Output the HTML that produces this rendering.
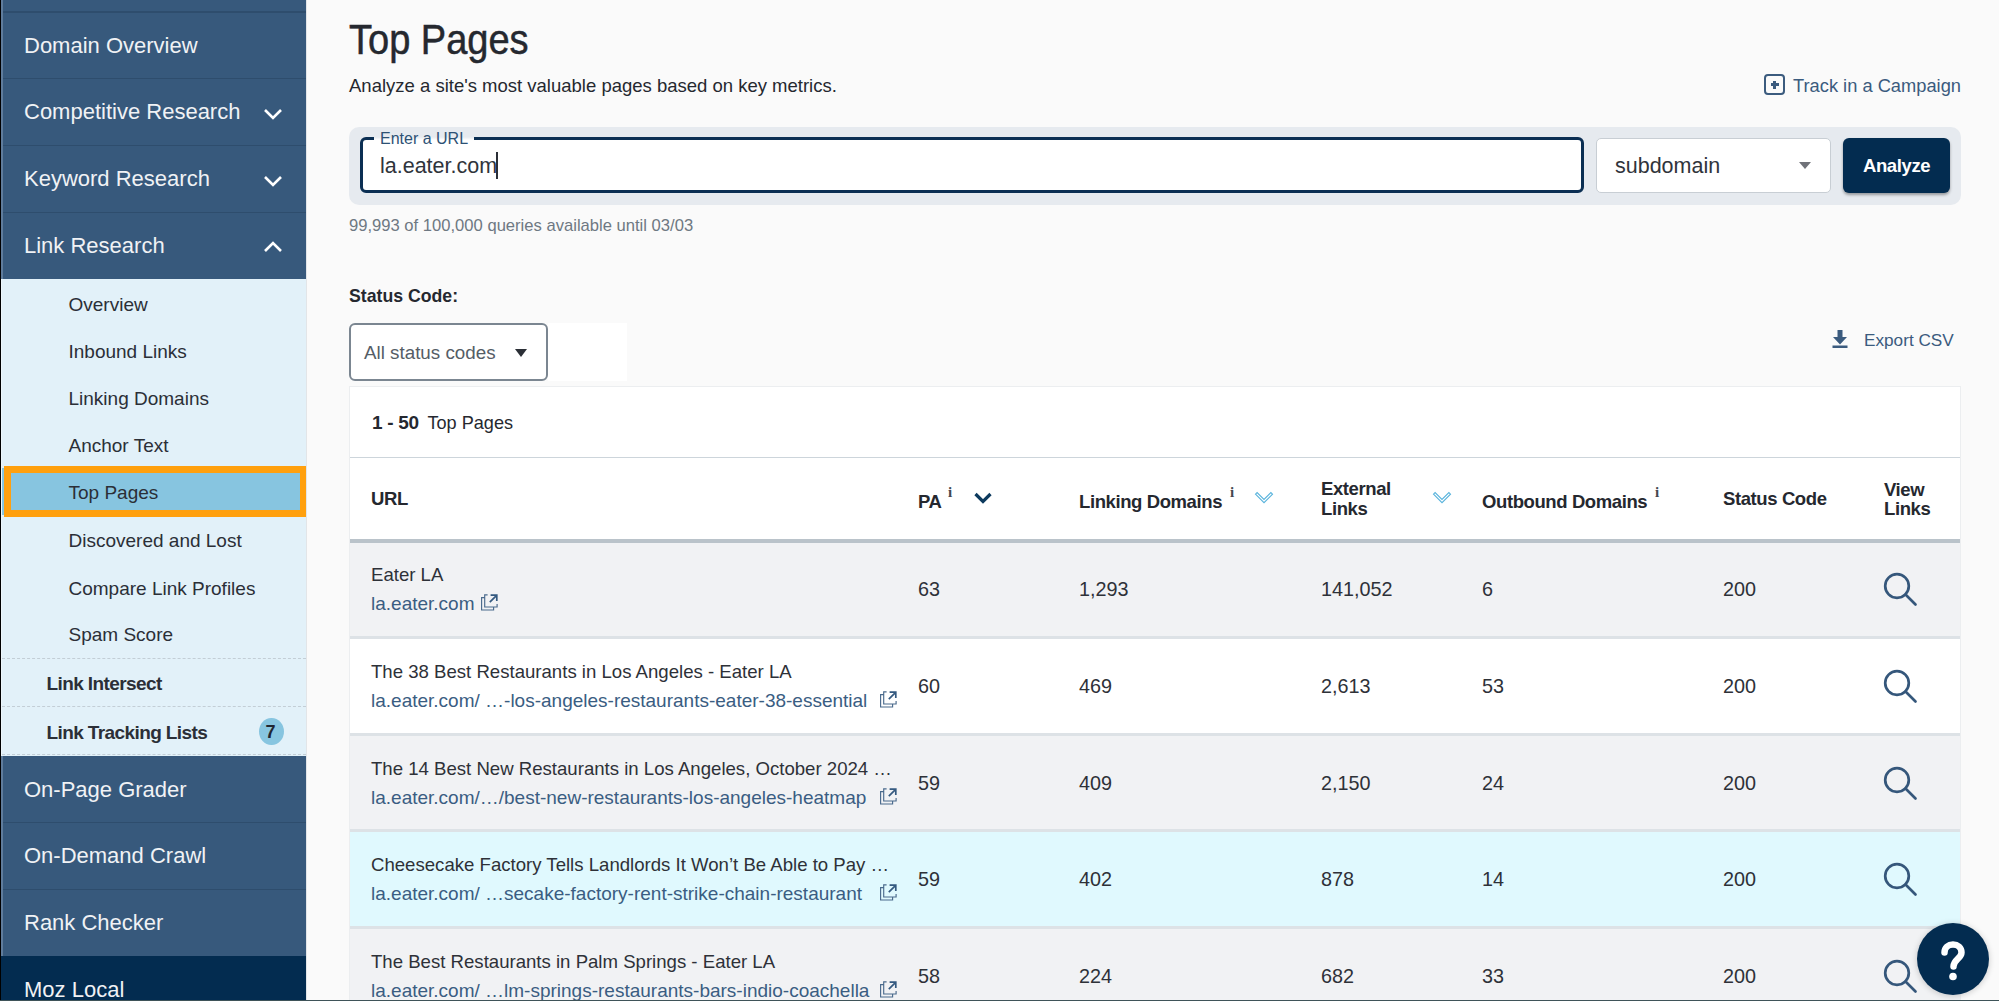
<!DOCTYPE html>
<html><head><meta charset="utf-8">
<style>
*{box-sizing:border-box;margin:0;padding:0}
html,body{width:1999px;height:1001px;overflow:hidden;background:#fafafa;font-family:"Liberation Sans",sans-serif;color:#2a2d35}
.a{position:absolute;white-space:nowrap;line-height:1}
</style></head>
<body>
<div style="position:absolute;left:0px;top:0px;width:306px;height:1001px;background:#37597c"></div>
<div style="position:absolute;left:0px;top:11px;width:306px;height:2px;background:#2e4d6d"></div>
<div style="position:absolute;left:0px;top:78px;width:306px;height:1px;background:#2e4d6d"></div>
<div style="position:absolute;left:0px;top:145px;width:306px;height:1px;background:#2e4d6d"></div>
<div style="position:absolute;left:0px;top:212px;width:306px;height:1px;background:#2e4d6d"></div>
<div style="position:absolute;left:0px;top:822px;width:306px;height:1px;background:#2e4d6d"></div>
<div style="position:absolute;left:0px;top:889px;width:306px;height:1px;background:#2e4d6d"></div>
<div class="a" style="left:24px;top:35.10px;font-size:22px;color:#f0f2f5">Domain Overview</div>
<div class="a" style="left:24px;top:101.30px;font-size:22px;color:#f0f2f5">Competitive Research</div>
<div class="a" style="left:24px;top:168.30px;font-size:22px;color:#f0f2f5">Keyword Research</div>
<div class="a" style="left:24px;top:235.30px;font-size:22px;color:#f0f2f5">Link Research</div>
<div class="a" style="left:24px;top:778.60px;font-size:22px;color:#f0f2f5">On-Page Grader</div>
<div class="a" style="left:24px;top:845.30px;font-size:22px;color:#f0f2f5">On-Demand Crawl</div>
<div class="a" style="left:24px;top:912.30px;font-size:22px;color:#f0f2f5">Rank Checker</div>
<svg style="position:absolute;left:263px;top:107px" width="20" height="14" viewBox="0 0 20 14"><path d="M2 3l8 8 8-8" fill="none" stroke="#fff" stroke-width="2.6"/></svg>
<svg style="position:absolute;left:263px;top:174px" width="20" height="14" viewBox="0 0 20 14"><path d="M2 3l8 8 8-8" fill="none" stroke="#fff" stroke-width="2.6"/></svg>
<svg style="position:absolute;left:263px;top:239.5px" width="20" height="14" viewBox="0 0 20 14"><path d="M2 11l8-8 8 8" fill="none" stroke="#fff" stroke-width="2.6"/></svg>
<div style="position:absolute;left:0px;top:279px;width:306px;height:477px;background:#e2f1f9"></div>
<div style="position:absolute;left:2px;top:468px;width:3px;height:47px;background:#87c5e0"></div>
<div style="position:absolute;left:4px;top:466px;width:303px;height:51px;border:7px solid #ffa00e;background:#87c5e0"></div>
<div class="a" style="left:68.5px;top:294.65px;font-size:19px;color:#2b2f37">Overview</div>
<div class="a" style="left:68.5px;top:341.85px;font-size:19px;color:#2b2f37">Inbound Links</div>
<div class="a" style="left:68.5px;top:389.05px;font-size:19px;color:#2b2f37">Linking Domains</div>
<div class="a" style="left:68.5px;top:436.25px;font-size:19px;color:#2b2f37">Anchor Text</div>
<div class="a" style="left:68.5px;top:483.25px;font-size:19px;color:#2b2f37">Top Pages</div>
<div class="a" style="left:68.5px;top:531.15px;font-size:19px;color:#2b2f37">Discovered and Lost</div>
<div class="a" style="left:68.5px;top:578.65px;font-size:19px;color:#2b2f37">Compare Link Profiles</div>
<div class="a" style="left:68.5px;top:625.45px;font-size:19px;color:#2b2f37">Spam Score</div>
<div style="position:absolute;left:2px;top:658px;width:304px;height:1px;border-top:1px dashed #c3ced6"></div>
<div style="position:absolute;left:2px;top:706px;width:304px;height:1px;border-top:1px dashed #c3ced6"></div>
<div style="position:absolute;left:2px;top:754px;width:304px;height:1px;border-top:1px dashed #c3ced6"></div>
<div class="a" style="left:46.5px;top:673.85px;font-size:19px;color:#2b2f37;font-weight:700;letter-spacing:-0.6px">Link Intersect</div>
<div class="a" style="left:46.5px;top:722.85px;font-size:19px;color:#2b2f37;font-weight:700;letter-spacing:-0.6px">Link Tracking Lists</div>
<div style="position:absolute;left:259px;top:717.5px;width:25px;height:27.5px;border-radius:50%;background:#87c5e0"></div>
<div class="a" style="left:265.5px;top:723.30px;font-size:18px;color:#1f2632;font-weight:700">7</div>
<div style="position:absolute;left:0px;top:956px;width:306px;height:45px;background:#032c50"></div>
<div class="a" style="left:24px;top:978.80px;font-size:22px;color:#f0f2f5">Moz Local</div>
<div style="position:absolute;left:0px;top:0px;width:1px;height:1001px;background:#000"></div>
<div style="position:absolute;left:1px;top:0px;width:2px;height:279px;background:#5f7c9c"></div>
<div style="position:absolute;left:1px;top:756px;width:2px;height:200px;background:#5f7c9c"></div>
<div style="position:absolute;left:1px;top:279px;width:1px;height:477px;background:#eef7fc"></div>
<div style="position:absolute;left:306px;top:0px;width:1px;height:1001px;background:#e2e5e8"></div>
<div class="a" style="left:349px;top:19.30px;font-size:42px;color:#25282f"><span style="display:inline-block;transform:scaleX(0.905);transform-origin:0 0;-webkit-text-stroke:0.5px #25282f">Top Pages</span></div>
<div class="a" style="left:349px;top:76.78px;font-size:18.5px;color:#25282f">Analyze a site's most valuable pages based on key metrics.</div>
<div style="position:absolute;left:1764px;top:74px;width:21px;height:21px;border:2px solid #3b5b7e;border-radius:4px"></div>
<div style="position:absolute;left:1770.5px;top:83px;width:8px;height:3px;background:#3b5b7e"></div>
<div style="position:absolute;left:1773px;top:80.5px;width:3px;height:8px;background:#3b5b7e"></div>
<div class="a" style="left:1793px;top:77.04px;font-size:18.3px;color:#3b5b7e">Track in a Campaign</div>
<div style="position:absolute;left:349px;top:127px;width:1612px;height:78px;background:#e6eaef;border-radius:10px"></div>
<div style="position:absolute;left:360px;top:137px;width:1224px;height:56px;background:#fff;border:3px solid #0b2f53;border-radius:6px"></div>
<div style="position:absolute;left:374px;top:134px;width:100px;height:8px;background:linear-gradient(#e6eaef 0,#e6eaef 3px,#fff 6px)"></div>
<div class="a" style="left:380px;top:130.90px;font-size:16px;color:#2d5174">Enter a URL</div>
<div class="a" style="left:380px;top:156.22px;font-size:21.5px;color:#30343b">la.eater.com</div>
<div style="position:absolute;left:496px;top:152px;width:2px;height:27px;background:#2b2f36"></div>
<div style="position:absolute;left:1596px;top:138px;width:235px;height:55px;background:#fff;border:1.5px solid #c8ced4;border-radius:5px"></div>
<div class="a" style="left:1615px;top:156.03px;font-size:21.5px;color:#30343b">subdomain</div>
<div style="position:absolute;left:1799px;top:162px;width:0px;height:0px;border-left:6px solid transparent;border-right:6px solid transparent;border-top:7px solid #707279"></div>
<div style="position:absolute;left:1843px;top:138px;width:107px;height:55px;background:#032c50;border-radius:6px;box-shadow:0 2px 3px rgba(0,0,0,.35)"></div>
<div class="a" style="left:1863px;top:157.28px;font-size:18.5px;color:#fff;font-weight:700;letter-spacing:-0.4px">Analyze</div>
<div class="a" style="left:349px;top:217.89px;font-size:16.6px;color:#6e7882">99,993 of 100,000 queries available until 03/03</div>
<div class="a" style="left:349px;top:287.75px;font-size:17.7px;color:#25282f;font-weight:700">Status Code:</div>
<div style="position:absolute;left:548px;top:323px;width:79px;height:58px;background:#fff"></div>
<div style="position:absolute;left:349px;top:323px;width:199px;height:58px;background:#fff;border:2px solid #7b8691;border-radius:6px"></div>
<div class="a" style="left:364px;top:343.72px;font-size:18.8px;color:#555d66">All status codes</div>
<div style="position:absolute;left:515px;top:349px;width:0px;height:0px;border-left:6.5px solid transparent;border-right:6.5px solid transparent;border-top:8px solid #2b2f36"></div>
<svg style="position:absolute;left:1832px;top:329px" width="16" height="20" viewBox="0 0 16 20"><path d="M5.5 1h5v7h4.5l-7 7.5-7-7.5h4.5z" fill="#3b5b7e"/><rect x="0.5" y="16.5" width="15" height="2.5" fill="#3b5b7e"/></svg>
<div class="a" style="left:1864px;top:331.58px;font-size:17.2px;color:#3b5b7e">Export CSV</div>
<div style="position:absolute;left:349px;top:386px;width:1612px;height:615px;background:#fff;border:1px solid #eceef0;border-bottom:none"></div>
<div style="position:absolute;left:350px;top:457px;width:1610px;height:1px;background:#cdd5db"></div>
<div style="position:absolute;left:350px;top:539px;width:1610px;height:4px;background:#bac3ca"></div>
<div class="a" style="left:372px;top:413.35px;font-size:19px;color:#25282f"><b style="letter-spacing:-0.3px">1 - 50</b></div>
<div class="a" style="left:427.5px;top:414.12px;font-size:18.1px;color:#25282f">Top Pages</div>
<div class="a" style="left:371px;top:490.07px;font-size:18.5px;font-weight:700;letter-spacing:-0.4px;color:#25282f">URL</div>
<div class="a" style="left:918px;top:492.97px;font-size:18.5px;font-weight:700;letter-spacing:-0.4px;color:#25282f">PA</div>
<div class="a" style="left:1079px;top:492.77px;font-size:18.5px;font-weight:700;letter-spacing:-0.4px;color:#25282f">Linking Domains</div>
<div class="a" style="left:1321px;top:480.27px;font-size:18.5px;font-weight:700;letter-spacing:-0.4px;color:#25282f">External</div>
<div class="a" style="left:1321px;top:499.88px;font-size:18.5px;font-weight:700;letter-spacing:-0.4px;color:#25282f">Links</div>
<div class="a" style="left:1482px;top:492.77px;font-size:18.5px;font-weight:700;letter-spacing:-0.4px;color:#25282f">Outbound Domains</div>
<div class="a" style="left:1723px;top:490.27px;font-size:18.5px;font-weight:700;letter-spacing:-0.4px;color:#25282f">Status Code</div>
<div class="a" style="left:1884px;top:480.67px;font-size:18.5px;font-weight:700;letter-spacing:-0.4px;color:#25282f">View</div>
<div class="a" style="left:1884px;top:499.88px;font-size:18.5px;font-weight:700;letter-spacing:-0.4px;color:#25282f">Links</div>
<div class="a" style="left:948px;top:484.75px;font-size:15px;font-family:'Liberation Serif',serif;font-weight:700;color:#45484f">i</div>
<div class="a" style="left:1230px;top:484.75px;font-size:15px;font-family:'Liberation Serif',serif;font-weight:700;color:#45484f">i</div>
<div class="a" style="left:1655px;top:484.75px;font-size:15px;font-family:'Liberation Serif',serif;font-weight:700;color:#45484f">i</div>
<svg style="position:absolute;left:973px;top:491px" width="20" height="15" viewBox="0 0 20 15"><path d="M2.5 3l7.5 7.5 7.5-7.5" fill="none" stroke="#0d3a5e" stroke-width="3.2"/></svg>
<svg style="position:absolute;left:1254px;top:491px" width="20" height="15" viewBox="0 0 20 15"><path d="M1.5 3.2l8.5 8.5 8.5-8.5 -1.6-1.6 -6.9 6.9 -6.9-6.9z" fill="#fff" stroke="#58b3dc" stroke-width="1.1"/></svg>
<svg style="position:absolute;left:1432px;top:491px" width="20" height="15" viewBox="0 0 20 15"><path d="M1.5 3.2l8.5 8.5 8.5-8.5 -1.6-1.6 -6.9 6.9 -6.9-6.9z" fill="#fff" stroke="#58b3dc" stroke-width="1.1"/></svg>
<div style="position:absolute;left:350px;top:543px;width:1610px;height:96px;background:#f1f2f4"></div>
<div style="position:absolute;left:350px;top:636px;width:1610px;height:3px;background:#dde2e6"></div>
<div class="a" style="left:371px;top:566.49px;font-size:18.6px;color:#2e3138">Eater LA</div>
<div class="a" style="left:371px;top:593.85px;font-size:19px;color:#3a5d82">la.eater.com</div>
<svg style="position:absolute;left:476px;top:588px" width="30" height="30" viewBox="0 0 30 30"><path d="M8.5 9.6H5.6V22H17.6V19.2M8.7 11.5V6.8H11.6M8.7 11.5V19H21.1V16" fill="none" stroke="#4a6a8c" stroke-width="1.15"/><path d="M13.8 14.2L20.4 7.6M14.6 7.1H20.8V13" fill="none" stroke="#355a80" stroke-width="1.7"/></svg>
<div class="a" style="left:918px;top:580.37px;font-size:19.8px;color:#2e3138">63</div>
<div class="a" style="left:1079px;top:580.37px;font-size:19.8px;color:#2e3138">1,293</div>
<div class="a" style="left:1321px;top:580.37px;font-size:19.8px;color:#2e3138">141,052</div>
<div class="a" style="left:1482px;top:580.37px;font-size:19.8px;color:#2e3138">6</div>
<div class="a" style="left:1723px;top:580.37px;font-size:19.8px;color:#2e3138">200</div>
<svg style="position:absolute;left:1882px;top:571px" width="36" height="36" viewBox="0 0 36 36"><circle cx="15" cy="15" r="11.8" fill="none" stroke="#35577b" stroke-width="2.7"/><path d="M23.5 23.5l10 10" stroke="#35577b" stroke-width="2.7" stroke-linecap="round"/></svg>
<div style="position:absolute;left:350px;top:639px;width:1610px;height:97px;background:#ffffff"></div>
<div style="position:absolute;left:350px;top:733px;width:1610px;height:3px;background:#dde2e6"></div>
<div class="a" style="left:371px;top:663.49px;font-size:18.6px;color:#2e3138">The 38 Best Restaurants in Los Angeles - Eater LA</div>
<div class="a" style="left:371px;top:690.85px;font-size:19px;color:#3a5d82">la.eater.com/ …-los-angeles-restaurants-eater-38-essential</div>
<svg style="position:absolute;left:875px;top:685px" width="30" height="30" viewBox="0 0 30 30"><path d="M8.5 9.6H5.6V22H17.6V19.2M8.7 11.5V6.8H11.6M8.7 11.5V19H21.1V16" fill="none" stroke="#4a6a8c" stroke-width="1.15"/><path d="M13.8 14.2L20.4 7.6M14.6 7.1H20.8V13" fill="none" stroke="#355a80" stroke-width="1.7"/></svg>
<div class="a" style="left:918px;top:677.37px;font-size:19.8px;color:#2e3138">60</div>
<div class="a" style="left:1079px;top:677.37px;font-size:19.8px;color:#2e3138">469</div>
<div class="a" style="left:1321px;top:677.37px;font-size:19.8px;color:#2e3138">2,613</div>
<div class="a" style="left:1482px;top:677.37px;font-size:19.8px;color:#2e3138">53</div>
<div class="a" style="left:1723px;top:677.37px;font-size:19.8px;color:#2e3138">200</div>
<svg style="position:absolute;left:1882px;top:668px" width="36" height="36" viewBox="0 0 36 36"><circle cx="15" cy="15" r="11.8" fill="none" stroke="#35577b" stroke-width="2.7"/><path d="M23.5 23.5l10 10" stroke="#35577b" stroke-width="2.7" stroke-linecap="round"/></svg>
<div style="position:absolute;left:350px;top:736px;width:1610px;height:96px;background:#f1f2f4"></div>
<div style="position:absolute;left:350px;top:829px;width:1610px;height:3px;background:#dde2e6"></div>
<div class="a" style="left:371px;top:760.49px;font-size:18.6px;color:#2e3138">The 14 Best New Restaurants in Los Angeles, October 2024 …</div>
<div class="a" style="left:371px;top:787.85px;font-size:19px;color:#3a5d82">la.eater.com/…/best-new-restaurants-los-angeles-heatmap</div>
<svg style="position:absolute;left:875px;top:782px" width="30" height="30" viewBox="0 0 30 30"><path d="M8.5 9.6H5.6V22H17.6V19.2M8.7 11.5V6.8H11.6M8.7 11.5V19H21.1V16" fill="none" stroke="#4a6a8c" stroke-width="1.15"/><path d="M13.8 14.2L20.4 7.6M14.6 7.1H20.8V13" fill="none" stroke="#355a80" stroke-width="1.7"/></svg>
<div class="a" style="left:918px;top:774.37px;font-size:19.8px;color:#2e3138">59</div>
<div class="a" style="left:1079px;top:774.37px;font-size:19.8px;color:#2e3138">409</div>
<div class="a" style="left:1321px;top:774.37px;font-size:19.8px;color:#2e3138">2,150</div>
<div class="a" style="left:1482px;top:774.37px;font-size:19.8px;color:#2e3138">24</div>
<div class="a" style="left:1723px;top:774.37px;font-size:19.8px;color:#2e3138">200</div>
<svg style="position:absolute;left:1882px;top:765px" width="36" height="36" viewBox="0 0 36 36"><circle cx="15" cy="15" r="11.8" fill="none" stroke="#35577b" stroke-width="2.7"/><path d="M23.5 23.5l10 10" stroke="#35577b" stroke-width="2.7" stroke-linecap="round"/></svg>
<div style="position:absolute;left:350px;top:832px;width:1610px;height:97px;background:#e0f9fe"></div>
<div style="position:absolute;left:350px;top:926px;width:1610px;height:3px;background:#dde2e6"></div>
<div class="a" style="left:371px;top:856.49px;font-size:18.6px;color:#2e3138">Cheesecake Factory Tells Landlords It Won’t Be Able to Pay …</div>
<div class="a" style="left:371px;top:883.85px;font-size:19px;color:#3a5d82">la.eater.com/ …secake-factory-rent-strike-chain-restaurant</div>
<svg style="position:absolute;left:875px;top:878px" width="30" height="30" viewBox="0 0 30 30"><path d="M8.5 9.6H5.6V22H17.6V19.2M8.7 11.5V6.8H11.6M8.7 11.5V19H21.1V16" fill="none" stroke="#4a6a8c" stroke-width="1.15"/><path d="M13.8 14.2L20.4 7.6M14.6 7.1H20.8V13" fill="none" stroke="#355a80" stroke-width="1.7"/></svg>
<div class="a" style="left:918px;top:870.37px;font-size:19.8px;color:#2e3138">59</div>
<div class="a" style="left:1079px;top:870.37px;font-size:19.8px;color:#2e3138">402</div>
<div class="a" style="left:1321px;top:870.37px;font-size:19.8px;color:#2e3138">878</div>
<div class="a" style="left:1482px;top:870.37px;font-size:19.8px;color:#2e3138">14</div>
<div class="a" style="left:1723px;top:870.37px;font-size:19.8px;color:#2e3138">200</div>
<svg style="position:absolute;left:1882px;top:861px" width="36" height="36" viewBox="0 0 36 36"><circle cx="15" cy="15" r="11.8" fill="none" stroke="#35577b" stroke-width="2.7"/><path d="M23.5 23.5l10 10" stroke="#35577b" stroke-width="2.7" stroke-linecap="round"/></svg>
<div style="position:absolute;left:350px;top:929px;width:1610px;height:72px;background:#f1f2f4"></div>
<div class="a" style="left:371px;top:953.49px;font-size:18.6px;color:#2e3138">The Best Restaurants in Palm Springs - Eater LA</div>
<div class="a" style="left:371px;top:980.85px;font-size:19px;color:#3a5d82">la.eater.com/ …lm-springs-restaurants-bars-indio-coachella</div>
<svg style="position:absolute;left:875px;top:975px" width="30" height="30" viewBox="0 0 30 30"><path d="M8.5 9.6H5.6V22H17.6V19.2M8.7 11.5V6.8H11.6M8.7 11.5V19H21.1V16" fill="none" stroke="#4a6a8c" stroke-width="1.15"/><path d="M13.8 14.2L20.4 7.6M14.6 7.1H20.8V13" fill="none" stroke="#355a80" stroke-width="1.7"/></svg>
<div class="a" style="left:918px;top:967.37px;font-size:19.8px;color:#2e3138">58</div>
<div class="a" style="left:1079px;top:967.37px;font-size:19.8px;color:#2e3138">224</div>
<div class="a" style="left:1321px;top:967.37px;font-size:19.8px;color:#2e3138">682</div>
<div class="a" style="left:1482px;top:967.37px;font-size:19.8px;color:#2e3138">33</div>
<div class="a" style="left:1723px;top:967.37px;font-size:19.8px;color:#2e3138">200</div>
<svg style="position:absolute;left:1882px;top:958px" width="36" height="36" viewBox="0 0 36 36"><circle cx="15" cy="15" r="11.8" fill="none" stroke="#35577b" stroke-width="2.7"/><path d="M23.5 23.5l10 10" stroke="#35577b" stroke-width="2.7" stroke-linecap="round"/></svg>
<div style="position:absolute;left:1917px;top:923px;width:72px;height:72px;border-radius:50%;background:#032c50;box-shadow:0 1px 6px rgba(0,0,0,.2)"></div>
<svg style="position:absolute;left:1935px;top:939.5px" width="36" height="44" viewBox="0 0 36 44"><path d="M9.5 12.5c0-5 3.8-8 8.5-8s8.5 3 8.5 8c0 6-8 7-8 14" fill="none" stroke="#fff" stroke-width="6.5" stroke-linecap="round"/><circle cx="18" cy="36.5" r="3.8" fill="#fff"/></svg>
<div style="position:absolute;left:0px;top:1000px;width:1999px;height:1px;background:#3f5459"></div>
</body></html>
